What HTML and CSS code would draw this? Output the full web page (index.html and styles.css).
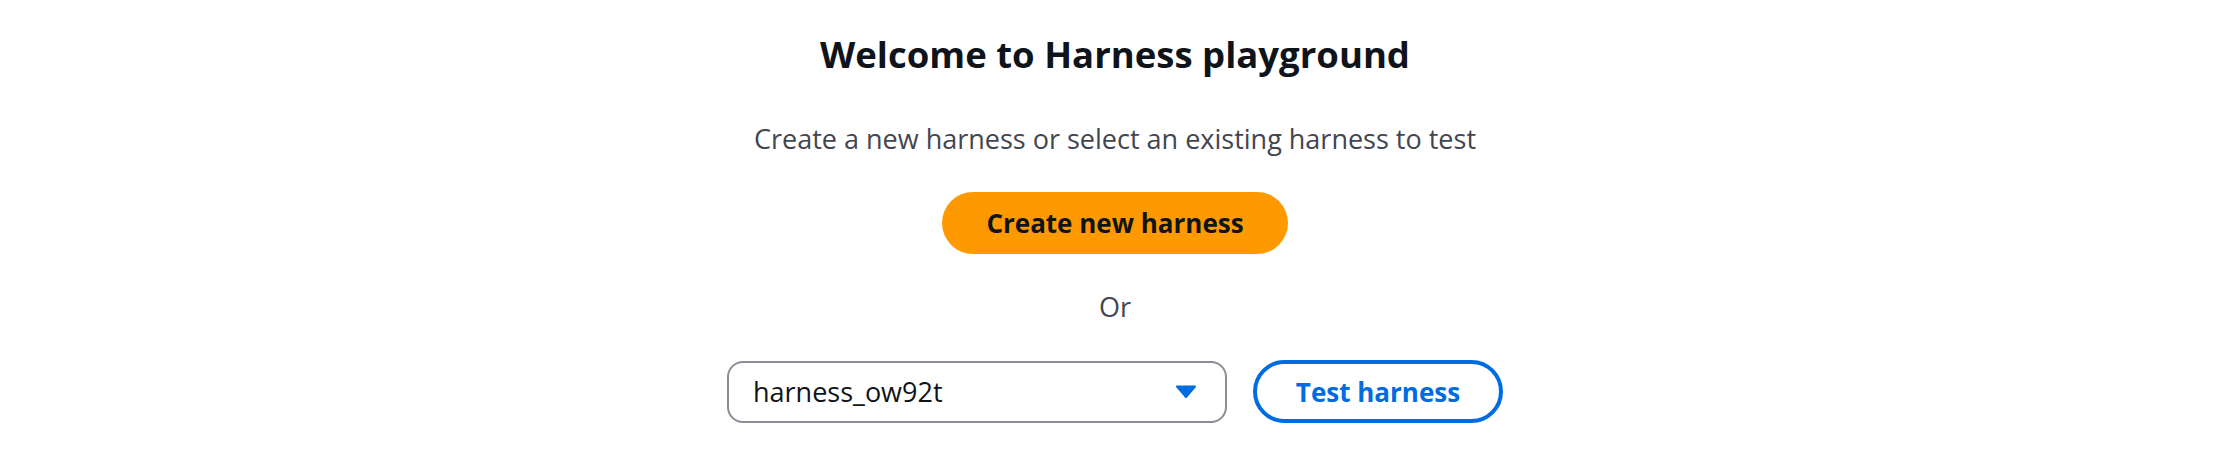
FILE: index.html
```html
<!DOCTYPE html>
<html lang="en">
<head>
  <meta charset="UTF-8">
  <meta name="viewport" content="width=device-width, initial-scale=1.0">
  <title>Harness playground</title>
  <link rel="stylesheet" href="styles.css">
</head>
<body>
  <div class="welcome">
    <h1>Welcome to Harness playground</h1>
    <p class="subtitle">Create a new harness or select an existing harness to test</p>
    <button class="btn-primary" type="button">Create new harness</button>
    <p class="or">Or</p>
    <div class="pick-row">
      <button class="select-trigger" type="button">
        <span class="select-value">harness_ow92t</span>
        <svg class="caret" viewBox="0 0 20 13" width="20" height="13" aria-hidden="true">
          <path d="M1 1.5h18L10 12z" fill="#006ce0" stroke="#006ce0" stroke-width="2" stroke-linejoin="round"/>
        </svg>
      </button>
      <button class="btn-normal" type="button">Test harness</button>
    </div>
  </div>
</body>
</html>
```

FILE: styles.css
```css
/* general */
body {
  margin: 0;
  padding: 0;
  background: #fff;
  font-family: "Open Sans", "Noto Sans", Arial, sans-serif;
  color: #0f141a;
}
.welcome {
  display: flex;
  flex-direction: column;
  align-items: center;
  gap: 35px;
  padding-top: 30px;
}
h1 {
  margin: 0 0 8px;
  font-size: 36.5px;
  line-height: 48px;
  font-weight: 700;
  color: #0f141a;
}
.subtitle,
.or {
  margin: 0;
  font-size: 27px;
  line-height: 36px;
  color: #424650;
}
/* buttons */
.btn-primary {
  height: 62px;
  padding: 0 44px;
  border: none;
  border-radius: 31px;
  background: #ff9900;
  color: #0f141a;
  font-family: inherit;
  font-size: 26px;
  font-weight: 700;
  cursor: pointer;
}
.pick-row {
  display: flex;
  align-items: center;
  gap: 26px;
}
.select-trigger {
  display: flex;
  align-items: center;
  justify-content: space-between;
  box-sizing: border-box;
  width: 500px;
  height: 62px;
  padding: 0 29px 0 24px;
  border: 2px solid #8c8c94;
  border-radius: 16px;
  background: #fff;
  color: #0f141a;
  font-family: inherit;
  font-size: 27px;
  cursor: pointer;
}
.caret {
  display: block;
}
.btn-normal {
  box-sizing: border-box;
  width: 250px;
  height: 63px;
  border: 4px solid #006ce0;
  border-radius: 32px;
  background: #fff;
  color: #006ce0;
  font-family: inherit;
  font-size: 26px;
  font-weight: 700;
  cursor: pointer;
}
```
